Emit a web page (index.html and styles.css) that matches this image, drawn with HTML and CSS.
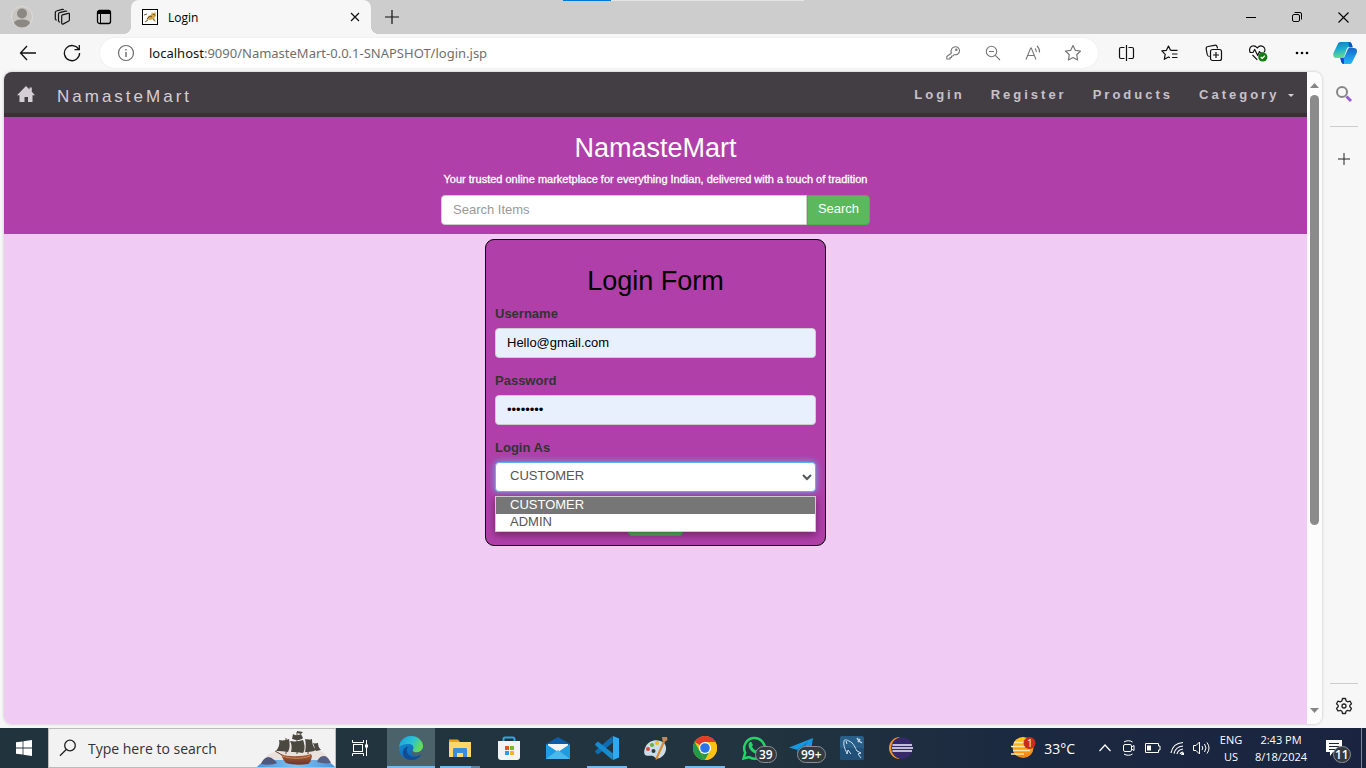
FILE: index.html
```html
<!DOCTYPE html>
<html lang="en">
<head>
<meta charset="utf-8">
<title>Login</title>
<meta name="viewport" content="width=device-width, initial-scale=1">
<link rel="stylesheet" href="styles.css">
</head>
<body>
<div class="desktop">
  <header class="titlebar">
    <button class="tb-btn profile" aria-label="Profile"><svg width="22" height="22" viewBox="0 0 22 22"><circle cx="11" cy="11" r="10.5" fill="#c9c6c2" stroke="#dedbd8"/><circle cx="11" cy="7.500" r="5" fill="#8b8783"/><path d="M3 17c1-3 4-3.600 8-3.600s7 .6 8 3.600c-2 3-5 4.500-8 4.500S5 20 3 17z" fill="#8b8783"/></svg></button>
    <button class="tb-btn" aria-label="Workspaces"><svg width="18" height="18" viewBox="0 0 18 18" fill="none" stroke="#111" stroke-width="1.200" stroke-linejoin="round"><path d="M9.500 6.800l5.700-1.500c.7-.2 1.200.1 1.200.8v5.700c0 .8-.3 1.200-1 1.500l-5 2.600c-.9.400-1.700.1-1.700-.8V8c0-.6.200-1 .8-1.200z"/><path d="M5.500 13.500V6.200c0-.9.400-1.300 1.200-1.500l5.800-1.600c.7-.2 1.200 0 1.400.5M5.500 13.500l1.500.8M2.300 11.500V4.500c0-.9.400-1.300 1.200-1.500L9.300 1.400c.7-.2 1.200 0 1.400.5M2.300 11.500l1.400.8"/></svg></button>
    <button class="tb-btn tab-actions" aria-label="Tab actions"><svg width="16" height="16" viewBox="0 0 16 16" fill="none" stroke="#000"><rect x="1.500" y="1.500" width="13" height="13" rx="2" stroke-width="1.300"/><path d="M1.500 3.500h13" stroke-width="3"/><path d="M4.500 4v10"/></svg></button>
    <div class="tab">
      <svg width="16" height="16" viewBox="0 0 16 16"><rect x=".5" y=".5" width="15" height="15" fill="#fff" stroke="#000"/><path d="M2 12l3-2 1-3 3-1 1-3 1 1.500L13.500 3l.5 4-2 2 2 3-3-2-3 1-3-.5z" fill="#d3a548"/><path d="M2 6l3-1M5 10l3-3 2 1M3 13l3-2M11 10l2 2.500M11 5l2 1" stroke="#5b4526" fill="none" stroke-width=".9"/></svg>
      <span class="tab-title">Login</span>
      <button class="tab-close" aria-label="Close tab"><svg width="10" height="10" viewBox="0 0 10 10" stroke="#111" stroke-width="1.200"><path d="M1 1l8 8M9 1l-8 8"/></svg></button>
    </div>
    <button class="tb-btn new-tab" aria-label="New tab"><svg width="14" height="14" viewBox="0 0 14 14" stroke="#111" stroke-width="1.200"><path d="M7 0v14M0 7h14"/></svg></button>
    <div class="win-controls">
      <button aria-label="Minimize"><svg width="10" height="10" viewBox="0 0 10 10" stroke="#000"><path d="M0 5.500h10"/></svg></button>
      <button aria-label="Restore"><svg width="10" height="10" viewBox="0 0 10 10" fill="none" stroke="#000"><rect x=".5" y="2.500" width="7" height="7" rx="1.500"/><path d="M2.500.5H8A1.500 1.500 0 0 1 9.500 2v5.500"/></svg></button>
      <button aria-label="Close"><svg width="11" height="11" viewBox="0 0 11 11" stroke="#000" stroke-width="1.100"><path d="M.5.5l10 10M10.500.5l-10 10"/></svg></button>
    </div>
    <div class="capture-strip"></div>
  </header>

  <div class="toolbar">
    <button class="nav-btn" aria-label="Back"><svg width="18" height="16" viewBox="0 0 18 16" fill="none" stroke="#111" stroke-width="1.300"><path d="M8 1L1.500 8 8 15M1.500 8H17"/></svg></button>
    <button class="nav-btn" aria-label="Refresh"><svg width="18" height="18" viewBox="0 0 18 18" fill="none" stroke="#111" stroke-width="1.300"><path d="M15.700 5.500A7.600 7.600 0 1 0 16.600 9M16.300 1v4.700h-4.800"/></svg></button>
    <div class="address">
      <svg class="info" width="18" height="18" viewBox="0 0 18 18" fill="none" stroke="#6b6b6b" stroke-width="1.200"><circle cx="9" cy="9" r="7.500"/><path d="M9 8v5M9 5v1.500" stroke-width="1.400"/></svg>
      <div class="url"><b>localhost</b>:9090/NamasteMart-0.0.1-SNAPSHOT/login.jsp</div>
      <div class="address-actions">
        <button aria-label="Passwords"><svg width="16" height="16" viewBox="0 0 16 16" fill="none" stroke="#767676" stroke-width="1.100" stroke-linejoin="round"><path d="M6.300 8.200C5.300 4.500 7.500 1.700 10.500 1.700a4 4 0 0 1 4 4c0 2.800-2.500 4.500-5.300 4L8 11H6.500v1.500H5V14H1.800v-2.500z"/><circle cx="11.300" cy="4.800" r=".7"/></svg></button>
        <button aria-label="Zoom out"><svg width="16" height="16" viewBox="0 0 16 16" fill="none" stroke="#767676" stroke-width="1.100"><circle cx="6.500" cy="6.500" r="5.200"/><path d="M4 6.500h5M10.300 10.300L15 15"/></svg></button>
        <button aria-label="Read aloud"><svg width="17" height="16" viewBox="0 0 17 16" fill="none" stroke="#767676" stroke-width="1.100"><path d="M1 14.500L5.700 3h.6L11 14.500M2.800 10.500h6.400M10 3.500c1 1 1.300 2 1.300 3.500M12 1c2 1.800 2.800 4 2.500 6.500"/></svg></button>
        <button aria-label="Add to favorites"><svg width="18" height="18" viewBox="0 0 18 18" fill="none" stroke="#767676" stroke-width="1.200" stroke-linejoin="round"><path d="M9 1.500l2.300 4.800 5.200.7-3.800 3.700.9 5.300L9 13.500 4.400 16l.9-5.300L1.500 7l5.200-.7z"/></svg></button>
      </div>
    </div>
    <div class="toolbar-actions">
      <button aria-label="Split screen"><svg width="17" height="16" viewBox="0 0 17 16" fill="none" stroke="#111" stroke-width="1.200"><path d="M6.500 2.500H3A1.500 1.500 0 0 0 1.500 4v8A1.500 1.500 0 0 0 3 13.500h3.500M10.500 2.500H14A1.500 1.500 0 0 1 15.500 4v8a1.500 1.500 0 0 1-1.500 1.500h-3.500M8.500 0v16"/></svg></button>
      <button aria-label="Favorites"><svg width="18" height="18" viewBox="0 0 18 18" fill="none" stroke="#111" stroke-width="1.200" stroke-linejoin="round"><path d="M9.500 6.300h7M11 10h5.500M11 13.500h5.500M9.500 6.300L7.500 2 5.400 6.300l-4.600.6 3.400 3.400-.9 5 4.200-2.400 1.500.9"/></svg></button>
      <button aria-label="Collections"><svg width="18" height="18" viewBox="0 0 18 18" fill="none" stroke="#111" stroke-width="1.200"><path d="M4.700 12.500C3 12.500 2.500 12 2.200 10.500L1.200 5C1 3.500 1.700 2.700 3 2.500L9.500 1.300C11 1 11.800 1.600 12.200 3l.3 1.500"/><rect x="5.500" y="5.500" width="11" height="11" rx="2"/><path d="M11 8v6M8 11h6"/></svg></button>
      <button aria-label="Browser essentials"><svg width="20" height="18" viewBox="0 0 20 18" fill="none" stroke="#111" stroke-width="1.200" stroke-linejoin="round"><path d="M2.400 8.500C1 6.500 1.400 3.500 3.600 2.300 6 1.200 8 2.300 9.300 4c1.300-1.700 3.600-2.700 5.700-1.500 2 1.200 2.400 3.700 1.200 5.700M4.500 11l4.800 4.800M1.500 8.500H5l1.700-3 3 6 1.800-4 1 1.500H16"/><circle cx="14.800" cy="13" r="4.600" fill="#107c10" stroke="none"/><path d="M12.700 13l1.500 1.500 2.700-2.900" stroke="#fff"/></svg></button>
      <button aria-label="More"><svg width="16" height="4" viewBox="0 0 16 4"><circle cx="3" cy="2" r="1.300"/><circle cx="8" cy="2" r="1.300"/><circle cx="13" cy="2" r="1.300"/></svg></button>
      <button class="copilot" aria-label="Copilot"><svg width="24" height="24" viewBox="0 0 24 24"><defs><linearGradient id="cpa" x2=".2" y2="1"><stop stop-color="#087fc5"/><stop offset=".5" stop-color="#1aafd0"/><stop offset="1" stop-color="#69da8b"/></linearGradient><linearGradient id="cpb" x2="0" y2="1"><stop stop-color="#1667c9"/><stop offset="1" stop-color="#22b8fa"/></linearGradient></defs><path d="M5 2.500C5.500 1.500 6.500 1 8 1h8c1.500 0 2.200.7 2.700 2l1 3h-3c-2 0-2.700.8-3.200 2.500L11.300 15c-.5 1.500-1 2-2.500 2H4c-3 0-4.300-2-3.500-5z" fill="url(#cpa)"/><path d="M19 21.500c-.5 1-1.500 1.500-3 1.500h-5c-1.500 0-2.200-.7-2.700-2l-1-4h1.500c2 0 2.700-.8 3.200-2.500L14.500 9c.5-1.500 1-2 2.500-2h3.500c3 0 4 2 3.200 5z" fill="url(#cpb)"/><path d="M15.500 1c1.700 0 2.700.7 3.200 2l1 3.500h-3.500z" fill="#0a55b7"/><path d="M11 23c-1.500 0-2.200-.7-2.700-2l-1-4h3.500z" fill="#1646c9"/></svg></button>
    </div>
  </div>

  <div class="browser-body">
    <div class="viewport">
      <div class="page">
        <nav class="navbar">
          <a class="home" href="#" aria-label="Home"><svg width="18" height="17" viewBox="0 0 18 17" fill="#d5ced6"><path d="M9 0l3.500 3.500V1.500h2.300v4.300L18 9.200h-2.500V16H11v-5H7.500v5H2.500V9.200H0z"/></svg></a>
          <a class="brand" href="#">NamasteMart</a>
          <ul class="nav-links">
            <li><a href="#">Login</a></li>
            <li><a href="#">Register</a></li>
            <li><a href="#">Products</a></li>
            <li><a href="#">Category <span class="caret"></span></a></li>
          </ul>
        </nav>
        <section class="hero">
          <h2>NamasteMart</h2>
          <h6>Your trusted online marketplace for everything Indian, delivered with a touch of tradition</h6>
          <form class="search">
            <input type="text" placeholder="Search Items" aria-label="Search Items">
            <button type="button">Search</button>
          </form>
        </section>
        <form class="card">
          <h2>Login Form</h2>
          <div class="field">
            <label for="user">Username</label>
            <input id="user" type="text" value="Hello@gmail.com">
          </div>
          <div class="field">
            <label for="pass">Password</label>
            <input id="pass" type="password" value="password">
          </div>
          <div class="field">
            <label for="role">Login As</label>
            <select id="role" class="open"><option>CUSTOMER</option><option>ADMIN</option></select>
            <ul class="options">
              <li class="selected">CUSTOMER</li>
              <li>ADMIN</li>
            </ul>
          </div>
          <button type="button" class="submit">Login</button>
        </form>
      </div>
      <div class="scrollbar">
        <svg width="9" height="6" viewBox="0 0 9 6" fill="#868686"><path d="M0 6L4.500 1 9 6z"/></svg>
        <div class="track"><div class="thumb"></div></div>
        <svg width="9" height="6" viewBox="0 0 9 6" fill="#868686"><path d="M0 0l4.500 5L9 0z"/></svg>
      </div>
    </div>
    <aside class="sidebar">
      <button aria-label="Search"><svg width="18" height="18" viewBox="0 0 18 18" fill="none"><circle cx="7" cy="7" r="5" stroke="#868686" stroke-width="2"/><path d="M11.500 11.500L16 16" stroke="#9560d5" stroke-width="3"/></svg></button>
      <hr>
      <button aria-label="Customize"><svg width="12" height="12" viewBox="0 0 12 12" stroke="#222"><path d="M6 0v12M0 6h12"/></svg></button>
      <hr class="push">
      <button aria-label="Settings"><svg width="18" height="18" viewBox="0 0 18 18" fill="none" stroke="#222" stroke-width="1.300" stroke-linejoin="round"><path d="M7.500 1.500h3l.6 2.400 1.500.9 2.400-.7 1.500 2.600L14.800 8.400v1.300l1.700 1.700-1.500 2.600-2.400-.7-1.500.9-.6 2.300h-3l-.6-2.300-1.500-.9-2.400.7-1.500-2.600 1.700-1.700V8.400L1.500 6.700 3 4.100l2.400.7 1.500-.9z"/><circle cx="9" cy="9" r="2"/></svg></button>
    </aside>
  </div>

  <footer class="taskbar">
    <button class="start" aria-label="Start"><svg width="16" height="16" viewBox="0 0 16 16" fill="#fff"><path d="M0 2.300L6.600 1.400v6.200H0zM7.400 1.300L16 0v7.600H7.400zM0 8.400h6.600v6.200L0 13.700zM7.400 8.400H16V16l-8.600-1.300z"/></svg></button>
    <label class="task-search">
      <svg width="18" height="18" viewBox="0 0 18 18" fill="none" stroke="#222" stroke-width="1.300"><circle cx="11" cy="6.500" r="5.300"/><path d="M7.200 10.500L1 16.800"/></svg>
      <input type="text" placeholder="Type here to search">
      <svg class="ship" width="78" height="38" viewBox="0 0 78 38"><defs><linearGradient id="sea" x2="1" y2="0"><stop stop-color="#4c93e0"/><stop offset=".5" stop-color="#7cc4f2"/><stop offset="1" stop-color="#4c93e0"/></linearGradient><linearGradient id="hull" x2="0" y2="1"><stop stop-color="#a8603c"/><stop offset="1" stop-color="#6f3328"/></linearGradient></defs><path d="M8 31c0-4 5-8 11-8l14-7h20l10 6c5 2 8 5 8 9z" fill="#ebe1dc"/><path d="M0 38c4-5 10-7 18-7h40c9 0 16 2 20 7z" fill="url(#sea)"/><path d="M4 35c1-3 3-6 7-7 3 0 7 3 9 6-4 2-11 2-16 1z" fill="#4d587c"/><path d="M60 33c1-3 3-6 7-6 3 0 5 3 7 7-5 1-10 0-14-1z" fill="#565f86"/><path d="M24 25c7 3 20 3 30 0l1 2c-1 5-2 7-4 8-7 1-16 1-22-1-3-3-4-6-5-9z" fill="url(#hull)"/><path d="M25 27c9 3 20 3 28 0" stroke="#d28a50" fill="none"/><path d="M40 3v22M29 9v16M51 10v15M18 22l7 4" stroke="#5f4b36"/><path d="M40 2l6 1-2 2-4-1zM36 5c3 2 6 1 8 0l2 4c-3 3-8 2-11 1zM33 12c6 1 9 0 13-1 2 5 2 10 0 13-5-1-8-1-12-1 1-4 1-7-1-11zM22 11c4 1 7 0 10-1 1 5 1 9-1 13-4-1-8-1-12-1 3-4 4-7 3-11zM48 10c3 1 5 1 7 0 0 4 1 8 4 11-4 2-8 2-11 2 1-4 1-9 0-13zM56 14c2 1 4 0 5 0 0 3 1 5 3 7l-5 1z" fill="#4b4840"/></svg>
    </label>
    <button class="task-view" aria-label="Task View"><svg width="17" height="16" viewBox="0 0 17 16" fill="none" stroke="#fff"><rect x="1.500" y="4.500" width="9" height="7"/><path d="M.5 0v2.500h11V0M.5 16v-2.500h11V16M14.500 0v16"/><path d="M13 4.500h3v3h-3z" fill="#fff" stroke="none"/></svg></button>
    <div class="apps">
      <button class="app active" aria-label="Edge"><svg width="24" height="24" viewBox="0 0 24 24"><defs><linearGradient id="eg" y2=".4"><stop stop-color="#1c9fdc"/><stop offset=".6" stop-color="#2bc3d1"/><stop offset="1" stop-color="#67db57"/></linearGradient><linearGradient id="eb" x2="1" y2="1"><stop stop-color="#1593dc"/><stop offset="1" stop-color="#0d55a4"/></linearGradient></defs><circle cx="12" cy="12" r="12" fill="url(#eb)"/><path d="M.2 11C1 4 6 0 12 0c7 0 12 5 12 10 0 4-3 6.500-6.500 6.500-3 0-4.500-1.500-3.500-3 1.500-2.500-.5-5.500-4-5.500C5 8 1 9.500.2 11z" fill="url(#eg)"/><path d="M9.500 10.500C6 13 8 21 15 21c3 0 5.500-1 7.400-3-2 4-6 6-10.400 6-5 0-9-4-8-8.500.5-3 3-5 5.500-5z" fill="#124c93"/><path d="M14 13.500c-1 1.500.5 3 3.500 3 2.200 0 4-1 5.100-2.500l1.400 0v3l-1.600 1c-1.500 1-3 2-5 2-4 0-7-3-3.400-6.500z" fill="#4c626b"/></svg></button>
      <button class="app running grouped" aria-label="File Explorer"><svg width="22" height="20" viewBox="0 0 22 20"><path d="M0 1.500h9L11 4v4H0z" fill="#e8a317"/><path d="M0 4h22v15H0z" fill="#ffd768"/><path d="M4 11.500c0-1 .5-1.500 1.500-1.500h11c1 0 1.500.5 1.500 1.500V19h-4v-4H8v4H4z" fill="#3a8ddb"/></svg></button>
      <button class="app" aria-label="Microsoft Store"><svg width="24" height="24" viewBox="0 0 24 24"><path d="M6.500 6V3q0-1.500 1.500-1.500h8Q17.500 1.500 17.500 3v3" fill="none" stroke="#2ba7e3" stroke-width="2"/><path d="M1 5h22v16q0 3-3 3H4q-3 0-3-3z" fill="#f3f3f3"/><path d="M8 10h4v4H8z" fill="#e8502a"/><path d="M13 10h4v4h-4z" fill="#7db726"/><path d="M8 15h4v4H8z" fill="#2a9fe0"/><path d="M13 15h4v4h-4z" fill="#f6b817"/></svg></button>
      <button class="app" aria-label="Mail"><svg width="24" height="24" viewBox="0 0 24 24"><path d="M0 8l12-7 12 7v6H0z" fill="#0d5cab"/><path d="M2 8h20v8H2z" fill="#f4f4f4"/><path d="M0 8l12 8 12-8v15H0z" fill="#1f9be2"/><path d="M0 23l12-9 12 9z" fill="#47b9ef"/></svg></button>
      <button class="app running" aria-label="Visual Studio Code"><svg width="24" height="24" viewBox="0 0 24 24"><path d="M18 0l6 2.500v19L18 24z" fill="#2daaf2"/><path d="M17.500 0l.5 6.500L3 18.500.3 16.200v-1.500z" fill="#0d6db4"/><path d="M17.500 24l.5-6.500L3 5.500.3 7.800v1.500z" fill="#178bd1"/></svg></button>
      <button class="app" aria-label="Paint"><svg width="24" height="24" viewBox="0 0 24 24"><path d="M2 10C5 4 14 2 20 7c4 4 2 12-4 15-4 1.500-5-1-7-2-3-1-7 1-8.500-2C-.3 15.500.5 12.500 2 10z" fill="#cbdde8"/><circle cx="4" cy="13" r="2" fill="#de473f"/><circle cx="8" cy="9" r="2" fill="#6ead3a"/><circle cx="13" cy="7" r="2" fill="#edbb22"/><circle cx="9.500" cy="15" r="2" fill="#263941"/><path d="M19 5l2 1-7.500 17-2 1 .5-3z" fill="#da8b35"/><path d="M18 1l5 0 .5 3-3 2-2-1z" fill="#c58855"/></svg></button>
      <button class="app running" aria-label="Chrome"><svg width="24" height="24" viewBox="0 0 24 24"><circle cx="12" cy="12" r="12" fill="#fbc116"/><path d="M12 12L1.600 6A12 12 0 0 1 22.400 6z" fill="#e33b2e"/><path d="M1.600 6l6 10.500L12 24A12 12 0 0 1 1.600 6z" fill="#229a48"/><path d="M12 24l5-9H7z" fill="#229a48"/><path d="M22.400 6H12l5 9-5 9A12 12 0 0 0 22.400 6z" fill="#fbc116"/><circle cx="12" cy="12" r="6" fill="#fff"/><circle cx="12" cy="12" r="4.800" fill="#2a75e6"/></svg></button>
      <button class="app" aria-label="WhatsApp"><svg width="24" height="24" viewBox="0 0 24 24"><path d="M1.500 22.500l1.700-5.800A10.300 10.300 0 1 1 7 21z" fill="none" stroke="#25d366" stroke-width="2.500"/><path d="M7 7l2-1.500 2 3.500-1 1.500c1 2 2 3 4 4l1.500-1.200L19 15c-.5 2.500-2 3.500-4 3-4.500-1-8.500-5-8.500-9z" fill="#25d366"/></svg><span class="badge">39</span></button>
      <button class="app telegram" aria-label="Telegram"><svg width="24" height="24" viewBox="0 0 24 24"><path d="M0 11.500L24 2l-3 20-8-5-4 4-.5-7z" fill="#1897df"/><path d="M8 14L19 6l-8 10-2 5z" fill="#0e6db0"/></svg><span class="badge">99+</span></button>
      <button class="app" aria-label="MySQL Workbench"><svg width="24" height="24" viewBox="0 0 24 24"><rect width="24" height="24" rx="2" fill="#285f88"/><path d="M0 12h24v10q0 2-2 2H2q-2 0-2-2z" fill="#204f77"/><path d="M7 18C6 14 3 11 4 5c.5-2 3-1 5 0 5 2 6 7 8 10l4 2-3 1 3 4M7 18l1-4 3 4M6 5l1 3" fill="none" stroke="#d3e3ee"/><path d="M17 2l2 3 3 2M20 3l-2 3" stroke="#c0d4e2" fill="none" stroke-width="1.500"/></svg></button>
      <button class="app" aria-label="Eclipse"><svg width="24" height="24" viewBox="0 0 24 24"><path d="M11 1a11 11 0 0 0 0 22A14 14 0 0 1 11 1z" fill="#ef9425"/><circle cx="13" cy="12" r="10.800" fill="#35296b"/><path d="M3.500 9h19.500M3 12h21M3.500 15h19.500" stroke="#f0eef8" stroke-width="1.600"/></svg></button>
    </div>
    <div class="tray">
      <button class="weather"><svg width="26" height="24" viewBox="0 0 26 24"><defs><linearGradient id="sun" x2="0" y2="1"><stop stop-color="#ffcf18"/><stop offset="1" stop-color="#f57d18"/></linearGradient></defs><circle cx="13" cy="11.500" r="10.500" fill="url(#sun)"/><path d="M4 6.500h12M1 10.500h14M3 14.500h17M1 18h13" stroke="#ffe9a6" stroke-width="1.500"/><circle cx="19.500" cy="7" r="6" fill="#cf2a1f"/><text x="17" y="11" class="weather-count">1</text></svg><span>33°C</span></button>
      <button class="tray-ic" aria-label="Hidden icons"><svg width="12" height="8" viewBox="0 0 12 8" fill="none" stroke="#fff" stroke-width="1.200"><path d="M.5 7L6 1l5.500 6"/></svg></button>
      <button class="tray-ic" aria-label="Meet Now"><svg width="14" height="16" viewBox="0 0 14 16" fill="none" stroke="#fff"><rect x="1.500" y="4.500" width="8" height="7" rx="1.500"/><path d="M9.500 7l2.500-1.500v5L9.500 9M2 2c2.500-1.700 6-1.700 8.500 0M2 14c2.500 1.700 6 1.700 8.500 0"/></svg></button>
      <button class="tray-ic" aria-label="Battery"><svg width="16" height="10" viewBox="0 0 16 10" fill="none" stroke="#fff"><path d="M.5.5h13V3H15v4h-1.500v2.500H.5z"/><path d="M2 2.500h4v5H2z" fill="#fff" stroke="none"/></svg></button>
      <button class="tray-ic" aria-label="Network"><svg width="14" height="14" viewBox="0 0 14 14" fill="none" stroke="#fff" stroke-width="1.200"><path d="M1 12C2 6 6 2 13 1.500M4 12.500C5 8 8 5.500 13 5M7 13c.5-2.500 2.500-4.500 6-5M10 13c.5-1 1.500-2 3-2"/><path d="M12 11.500h2V14h-3z" fill="#fff" stroke="none"/></svg></button>
      <button class="tray-ic" aria-label="Volume"><svg width="17" height="14" viewBox="0 0 17 14" fill="none" stroke="#fff"><path d="M.5 4.500H3L6.500 1v12L3 9.500H.5zM9 5q1.500 2 0 4M11.500 3q3 4 0 8M14 1.500q4 5.500 0 11"/></svg></button>
      <button class="lang"><span>ENG</span><span>US</span></button>
      <button class="clock"><span>2:43 PM</span><span>8/18/2024</span></button>
      <button class="notify" aria-label="Notifications"><svg width="16" height="16" viewBox="0 0 16 16"><path d="M0 0h16v12H7l-3 4v-4H0z" fill="#fff"/><path d="M3 3.500h10M3 6.500h10M3 9.500h7" stroke="#1b2740"/></svg><span class="badge round">11</span></button>
      <div class="peek"></div>
    </div>
  </footer>
</div>
</body>
</html>
```
FILE: styles.css
```css
* { box-sizing: border-box; }
body { margin: 0; font-family: "Liberation Sans", Arial, sans-serif; font-size: 13px; }
button { border: 0; padding: 0; background: none; font: inherit; color: inherit; }
button svg { display: block; }
h2, h6, ul, hr { margin: 0; padding: 0; }
ul { list-style: none; }
a { color: inherit; text-decoration: none; }

.desktop { display: flex; flex-direction: column; min-height: 100vh; background: #f7f7f7; }

/* Window title bar */
.titlebar { position: relative; display: flex; align-items: center; height: 34px; padding-left: 2px; background: #cdcdcd; font-family: "Open Sans", "Noto Sans", sans-serif; }
.tb-btn { display: flex; align-items: center; justify-content: center; width: 40px; height: 34px; }
.tab-actions { width: 44px; }
.new-tab { width: 42px; }
.tab { position: relative; display: flex; align-items: center; align-self: stretch; gap: 10px; width: 240px; margin-left: 5px; padding: 0 11px; background: #f7f7f7; border-radius: 8px 8px 0 0; font-size: 12px; }
.tab::before, .tab::after { content: ""; position: absolute; bottom: 0; width: 8px; height: 8px; }
.tab::before { left: -8px; background: radial-gradient(circle at 0 0, #cdcdcd 8px, #f7f7f7 8px); }
.tab::after { right: -8px; background: radial-gradient(circle at 100% 0, #cdcdcd 8px, #f7f7f7 8px); }
.tab-title { flex: 1; }
.win-controls { display: flex; align-self: stretch; margin-left: auto; }
.win-controls button { display: flex; align-items: center; justify-content: center; width: 46px; }
.capture-strip { position: absolute; top: 0; left: 50%; width: 241px; height: 1px; margin-left: -120px; background: linear-gradient(90deg, #0078d7 48px, #e4e4e4 48px); }

/* Address toolbar */
.toolbar { display: flex; align-items: center; height: 38px; padding-left: 6px; background: #f7f7f7; }
.nav-btn { display: flex; align-items: center; justify-content: center; width: 44px; height: 34px; }
.address { display: flex; flex: 1; align-items: center; min-width: 0; height: 30px; margin-left: 6px; padding: 0 5px 0 17px; background: #fff; border-radius: 15px; box-shadow: 0 0 2px #e4e4e4; }
.info { flex: none; }
.url { flex: 1; min-width: 0; margin-left: 14px; overflow: hidden; white-space: nowrap; font-family: "Noto Sans", "Open Sans", sans-serif; font-size: 13px; color: #6f6f6f; }
.url b { font-weight: 400; color: #111; }
.address-actions { display: flex; }
.address-actions button { display: flex; align-items: center; justify-content: center; width: 40px; }
.toolbar-actions { display: flex; align-items: center; margin-left: 6px; }
.toolbar-actions button { display: flex; align-items: center; justify-content: center; width: 44px; }
.toolbar-actions .copilot { width: 42px; }

/* Browser content area */
.browser-body { display: flex; flex: 1; }
.viewport { display: flex; flex: 1; margin: 0 0 4px 4px; overflow: hidden; border-radius: 8px; box-shadow: 0 0 3px #bbb; }
.page { flex: 1; background: #f0ccf4; color: #333; }
.scrollbar { display: flex; flex-direction: column; align-items: center; width: 15px; padding: 10px 0; background: #fcfcfc; }
.track { flex: 1; width: 9px; padding: 7px 0; }
.thumb { height: 71%; background: #8b8b8b; border-radius: 5px; }
.sidebar { display: flex; flex-direction: column; align-items: center; width: 44px; }
.sidebar button { display: flex; align-items: center; justify-content: center; width: 44px; height: 44px; }
.sidebar hr { width: 28px; height: 1px; margin: 10px 0; border: 0; background: #ccc; }
.sidebar .push { margin: auto 0 0; }

/* Site navigation */
.navbar { display: flex; align-items: center; height: 45px; padding: 4px 13px 0 13px; background: #433e44; border-bottom: 4px solid #3b2f3b; color: #d5ced6; }
.home { display: flex; }
.brand { margin-left: 22px; padding-top: 4px; font-size: 17px; letter-spacing: 3px; }
.nav-links { display: flex; gap: 26px; margin-left: auto; color: #c9c1ca; font-size: 13px; font-weight: 700; letter-spacing: 3px; }
.caret { display: inline-block; margin-left: 2px; border: 3px solid transparent; border-top-color: #d5ced6; border-bottom: 0; vertical-align: middle; }

/* Banner */
.hero { display: flex; flex-direction: column; align-items: center; padding: 16px 9px 9px; background: #b03fa9; color: #fff; }
.hero h2, .card h2 { font-size: 27px; font-weight: 400; line-height: 30px; }
.hero h6 { margin: 9px 0; font-size: 11px; font-weight: 400; line-height: 14px; -webkit-text-stroke: 0.3px; }
.search { display: flex; width: 429px; max-width: 100%; }
.search input { flex: 1; min-width: 0; height: 30px; padding: 0 11px 2px; border: 1px solid #ccc; border-radius: 4px 0 0 4px; font: inherit; }
.search input::placeholder { color: #999; }
.search button { width: 63px; padding-bottom: 3px; background: #5cb85c; border: 1px solid #4cae4c; border-radius: 0 4px 4px 0; }

/* Login card */
.card { display: flex; flex-direction: column; width: 341px; max-width: 100%; margin: 5px auto; padding: 26px 9px 9px; background: #b03fa9; border: 1px solid #000; border-radius: 9px; }
.card h2 { margin-bottom: 9px; color: #000; text-align: center; }
.field { position: relative; display: flex; flex-direction: column; gap: 5px; margin-bottom: 14px; }
.field label { line-height: 18px; font-weight: 700; }
.field input, .field select { width: 100%; height: 30px; padding: 0 11px 2px; border: 1px solid #ccc; border-radius: 4px; font: inherit; }
.field input { background: #e8f0fe; color: #000; }
.field select { padding: 0 10px 4px; background: #fff; color: #555; }
.field .open { border-color: #66afe9; box-shadow: 0 0 7px #66afe9; }
.options { position: absolute; z-index: 1; top: 100%; left: 0; right: 0; margin-top: 4px; background: #fff; border: 1px solid #ccc; box-shadow: 0 3px 8px rgba(0, 0, 0, 0.4); color: #555; line-height: 15px; }
.options li { padding: 0 14px 2px; }
.options .selected { background: #767676; color: #fff; }
.submit { align-self: center; width: 55px; height: 30px; background: #5cb85c; border: 1px solid #4cae4c; border-radius: 4px; color: #fff; }

/* Taskbar */
.taskbar { display: flex; height: 40px; background: linear-gradient(90deg, #21343e, #22343f 55%, #1b2940 75%, #1a2440); color: #fff; font-family: "Open Sans", "Noto Sans", sans-serif; }
.taskbar button { display: flex; align-items: center; justify-content: center; }
.start, .task-view { width: 48px; }
.task-search { display: flex; align-items: center; width: 288px; padding-left: 10px; background: #f2f2f2; border: 1px solid #bbb; }
.task-search input { flex: 1; min-width: 0; margin-left: 11px; padding: 0; background: none; border: 0; font: inherit; font-size: 14px; }
.task-search input::placeholder { color: #333; }
.ship { flex: none; }
.apps { display: flex; gap: 1px; margin-left: 3px; }
.app { position: relative; width: 48px; }
.active { background: #4c626b; border-bottom: 2px solid #76b9ed; padding-top: 2px; }
.running::after { content: ""; position: absolute; left: 4px; right: 4px; bottom: 0; height: 2px; background: #76b9ed; }
.grouped::after { background: linear-gradient(90deg, #76b9ed 31px, #5683a6 31px); }
.badge { position: absolute; left: 25px; bottom: 5px; padding: 0 3px; background: #343b40; border: 1px solid #8a8f93; border-radius: 9px; font-size: 12px; font-weight: 600; line-height: 15px; }
.round { left: 20px; padding: 0 1px; }
.telegram .badge { left: 18px; }
.telegram svg { margin-right: 4px; }
.tray { display: flex; margin-left: auto; font-size: 12px; }
.weather { gap: 8px; margin-right: 18px; font-size: 14px; }
.weather-count { fill: #fff; font-size: 10px; }
.tray-ic { width: 24px; }
.taskbar .lang, .taskbar .clock { flex-direction: column; width: 36px; line-height: 17px; }
.taskbar .clock { width: 64px; font-size: 11px; }
.taskbar .lang { font-size: 11px; }
.notify { position: relative; width: 42px; margin-right: 4px; }
.peek { width: 5px; margin-left: 2px; border-left: 1px solid #7d8594; }
```
